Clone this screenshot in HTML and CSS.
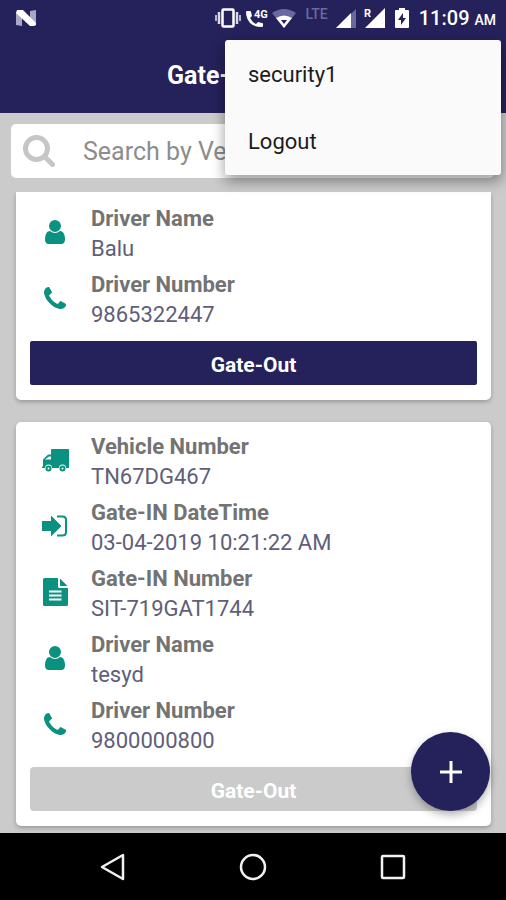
FILE: index.html
```html
<!DOCTYPE html>
<html lang="en">
<head>
<meta charset="utf-8">
<meta name="viewport" content="width=device-width, initial-scale=1">
<title>Gate</title>
<link rel="stylesheet" href="styles.css">
</head>
<body>
<svg class="sprite" aria-hidden="true">
  <symbol id="user" viewBox="0 0 1280 1536"><path d="M1280 1271q0 109-62.500 187t-150.500 78H213q-88 0-150.500-78T0 1271q0-85 8.500-160.500t31.500-152 58.500-131 94-89T327 704q131 128 313 128t313-128q76 0 134.500 34.500t94 89 58.500 131 31.500 152 8.500 160.500zM1024 384q0 159-112.500 271.500T640 768 368.500 655.500 256 384t112.500-271.500T640 0t271.500 112.500T1024 384z"/></symbol>
  <symbol id="phone" viewBox="0 0 1408 1408"><path d="M1408 1112q0 27-10 70.500t-21 68.500q-21 50-122 106-94 51-186 51-27 0-53-3.500t-57.500-12.500-47-14.500-55.500-20.500-49-18q-98-35-175-83-127-79-264-216T152 777q-48-77-83-175-3-9-18-49t-20.500-55.500-14.500-47T3.500 392.500 0 340q0-92 51-186Q107 53 157 32q25-11 68.500-21T296 1q14 0 21 3 18 6 53 76 11 19 30 54t35 63.500 31 53.500q3 4 17.500 25t21.500 35.500 7 28.500q0 20-28.500 50t-62 55-62 53-28.500 46q0 9 5 22.500t8.500 20.500 14 24 11.500 19q76 137 174 235t235 174q2 1 19 11.500t24 14 20.500 8.500 22.500 5q18 0 46-28.500t53-62 55-62 50-28.500q14 0 28.500 7t35.500 21.500 25 17.500q25 15 53.500 31t63.500 35 54 30q70 35 76 53 3 7 3 21z"/></symbol>
  <symbol id="truck" viewBox="0 0 27 23"><path fill-rule="evenodd" d="M10 0H26Q27 0 27 1V19H24A3.500 3.500 0 0 0 17 19H10A3.500 3.500 0 0 0 3 19H0V17.500H1V11.500Q1 10.500 1.800 9.700L5.300 6.200Q6 5.500 7 5.500H9V1Q9 0 10 0ZM3 10.500H9V7.500H7.200Q6.700 7.500 6.300 7.900L3 10.500Z"/><circle cx="6.500" cy="19.500" r="3"/><circle cx="20.500" cy="19.500" r="3"/><circle cx="6.500" cy="19.500" r="1" fill="#fff"/><circle cx="20.500" cy="19.500" r="1" fill="#fff"/></symbol>
  <symbol id="enter" viewBox="0 0 26 22"><path d="M0 6H9V0.500L19.500 11L9 21.500V16H0Z"/><path d="M15 1.500H20.500Q24 1.500 24 5V17Q24 20.500 20.500 20.500H15" fill="none" stroke="currentColor" stroke-width="2"/></symbol>
  <symbol id="file" viewBox="0 0 25 28"><path fill-rule="evenodd" d="M1.500 0H15V8.500Q15 10 16.500 10H25V26.500Q25 28 23.500 28H1.500Q0 28 0 26.500V1.500Q0 0 1.500 0ZM6 12.500V14.500H18.500V12.500ZM6 16.500V18.500H18.500V16.500ZM6 20.500V22.500H18.500V20.500Z"/><path d="M17 0.500L24.500 8H17Z"/></symbol>
</svg>

<div class="app">
  <header class="top">
    <div class="status">
      <svg class="logo" width="22" height="16" viewBox="0 0 22 16"><path d="M1 2L7 5V16L1 15ZM15 1L21 0V14L15 11Z" fill="#aaa7c4"/><path d="M2 0H8L21 13V15Q20 16 18 16H15L1 3Z" fill="#fff"/></svg>
      <div class="tray">
        <svg width="26" height="20" viewBox="0 0 26 20"><rect x="7.500" y="1.500" width="11" height="17" rx="1" fill="none" stroke="#fff" stroke-width="2.500"/><path d="M4 4V16M22 4V16" stroke="#dad9e8" stroke-width="2.500"/><path d="M1 7V13M25 7V13" stroke="#b5b3cd" stroke-width="2"/></svg>
        <svg class="call" width="22" height="20" viewBox="0 0 22 20"><path d="M0 4Q0 3 1 3H4Q5 3 5 4L6 8L4 10Q6 14 10 16L12 14L16 15Q17 15 17 16V18Q17 19 16 19Q8 19 4 15Q0 10 0 4Z" fill="#fff"/><text x="8" y="10" class="tiny">4G</text></svg>
        <svg class="wifi" width="24" height="19" viewBox="0 0 24 19"><path d="M0 4Q12-4 24 4L12 19Z" fill="#6b68a0"/><path d="M4 9Q12 4 20 9L12 19Z" fill="#fff"/><path d="M9 11H15L12 15Z" fill="#25215b"/></svg>
        <span class="lte">LTE</span>
        <svg class="signal" width="20" height="19" viewBox="0 0 20 19"><path d="M0 19L20 0V19Z" fill="#6b68a0"/><path d="M0 19L15 4V19Z" fill="#fff"/></svg>
        <svg class="signal" width="21" height="20" viewBox="0 0 21 20"><path d="M1 20L21 0V20Z" fill="#fff"/><text x="0" y="9" class="tiny">R</text></svg>
        <svg class="battery" width="14" height="20" viewBox="0 0 14 20"><path d="M4 0H10V2H13Q14 2 14 3V19Q14 20 13 20H1Q0 20 0 19V3Q0 2 1 2H4Z" fill="#fff"/><path d="M8 5L3 12H6V17L11 10H8Z" fill="#25215b"/></svg>
        <span class="clock">11:09 <small>AM</small></span>
      </div>
    </div>
    <h1>Gate-</h1>
    <div class="menu" role="menu">
      <button type="button" role="menuitem">security1</button>
      <button type="button" role="menuitem">Logout</button>
    </div>
  </header>

  <label class="search">
    <svg width="32" height="32" viewBox="0 0 32 32" fill="none" stroke="#c6c6c6"><circle cx="13.500" cy="13.500" r="11" stroke-width="5"/><path d="M22 22L29.500 29.500" stroke-width="5" stroke-linecap="round"/></svg>
    <input type="search" placeholder="Search by Ve" aria-label="Search by Ve">
  </label>

  <main class="list">
    <article class="card first">
      <dl>
        <div class="row"><svg class="user"><use href="#user"/></svg><dt>Driver Name</dt><dd>Balu</dd></div>
        <div class="row"><svg class="phone"><use href="#phone"/></svg><dt>Driver Number</dt><dd>9865322447</dd></div>
      </dl>
      <button type="button" class="out">Gate-Out</button>
    </article>
    <article class="card">
      <dl>
        <div class="row"><svg class="truck"><use href="#truck"/></svg><dt>Vehicle Number</dt><dd>TN67DG467</dd></div>
        <div class="row"><svg class="enter"><use href="#enter"/></svg><dt>Gate-IN DateTime</dt><dd>03-04-2019 10:21:22 AM</dd></div>
        <div class="row"><svg class="file"><use href="#file"/></svg><dt>Gate-IN Number</dt><dd>SIT-719GAT1744</dd></div>
        <div class="row"><svg class="user"><use href="#user"/></svg><dt>Driver Name</dt><dd>tesyd</dd></div>
        <div class="row"><svg class="phone"><use href="#phone"/></svg><dt>Driver Number</dt><dd>9800000800</dd></div>
      </dl>
      <button type="button" class="out" disabled>Gate-Out</button>
    </article>
    <button type="button" class="fab" aria-label="Add"><svg width="22" height="22" viewBox="0 0 22 22"><path d="M11 0V22M0 11H22" stroke="#fff" stroke-width="3"/></svg></button>
  </main>

  <nav class="keys">
    <button type="button" aria-label="Back"><svg width="28" height="28" viewBox="0 0 28 28"><path d="M3 14L24 2V26Z"/></svg></button>
    <button type="button" aria-label="Home"><svg width="28" height="28" viewBox="0 0 28 28"><circle cx="14" cy="14" r="12"/></svg></button>
    <button type="button" aria-label="Recent"><svg width="28" height="28" viewBox="0 0 28 28"><rect x="3" y="3" width="22" height="22" rx="1"/></svg></button>
  </nav>
</div>
</body>
</html>
```
FILE: styles.css
```css
* { box-sizing: border-box; }
body { margin: 0; background: #cbcbcb; font-family: Roboto, "Liberation Sans", sans-serif; font-size: 22px; }
button { font: inherit; border: 0; padding: 0; }
.sprite { display: none; }
.app { min-height: 100vh; display: flex; flex-direction: column; }

.top { position: relative; background: #25215b; color: #fff; }
.status { display: flex; justify-content: space-between; align-items: center; height: 36px; padding: 0 10px 0 15px; }
.tray { display: flex; align-items: center; }
.call { margin-left: 5px; }
.wifi { margin-left: 4px; }
.lte { margin-left: 9px; align-self: flex-start; font-size: 14px; line-height: 16px; font-weight: 500; color: #6b68a0; }
.signal { margin-left: 8px; }
.battery { margin-left: 10px; }
.tiny { font-size: 11px; font-weight: 700; fill: #fff; }
.clock { margin-left: 10px; font-size: 20px; font-weight: 500; }
.clock small { font-size: 14px; }
.top h1 { margin: 0; padding: 25px 0 22px 167px; font-size: 25px; line-height: 30px; font-weight: 700; }

.menu { position: absolute; z-index: 2; top: 40px; right: 5px; width: 276px; display: flex; flex-direction: column; padding-top: 1px; background: #fafafa; border-radius: 3px; box-shadow: 0 6px 14px rgba(0, 0, 0, .4); }
.menu button { height: 67px; padding: 0 23px; background: none; color: #1c1c1c; text-align: left; }

.search { display: flex; align-items: center; gap: 28px; height: 54px; margin: 11px 12px 14px 11px; padding: 0 12px; background: #fff; border-radius: 5px; }
.search svg { flex: none; }
.search input { flex: 1; min-width: 0; border: 0; padding: 0; outline: 0; background: none; font: inherit; font-size: 25px; }
.search input::placeholder { color: #8d8d8d; opacity: 1; }

.list { position: relative; flex: 1; overflow: hidden; padding: 0 15px 7px 16px; }
.card { padding: 10px 14px 15px; background: #fff; border-radius: 5px; box-shadow: 0 2px 4px rgba(0, 0, 0, .25); }
.first { margin-bottom: 22px; padding-top: 12px; border-radius: 0 0 5px 5px; }
.card dl { display: grid; gap: 6px; margin: 0 0 11px; }
.row { display: grid; grid-template-columns: 50px 1fr; column-gap: 11px; line-height: 30px; }
.row svg { grid-row: 1 / 3; align-self: center; justify-self: center; margin-bottom: 4px; color: #0b917f; fill: currentColor; }
.row dt { font-weight: 700; color: #737373; }
.row dd { margin: 0; color: #605e78; }
.user { width: 20px; height: 24px; }
.phone { width: 22px; height: 22px; }
.truck { width: 27px; height: 23px; }
.enter { width: 26px; height: 22px; }
.file { width: 25px; height: 28px; }
.out { display: block; width: 100%; height: 44px; padding-top: 3px; border-radius: 2px; background: #25215b; color: #fff; font-size: 21px; font-weight: 700; }
.out:disabled { border-radius: 4px; background: #cbcbcb; }

.fab { position: absolute; right: 16px; bottom: 22px; display: grid; place-items: center; width: 79px; height: 79px; border-radius: 50%; background: #25215b; box-shadow: 0 4px 8px rgba(0, 0, 0, .3); }

.keys { display: flex; justify-content: center; gap: 112px; height: 67px; background: #000; }
.keys button { display: grid; place-items: center; width: 28px; background: none; }
.keys svg { fill: none; stroke: #f2f2f2; stroke-width: 2.5; stroke-linejoin: round; }
```
